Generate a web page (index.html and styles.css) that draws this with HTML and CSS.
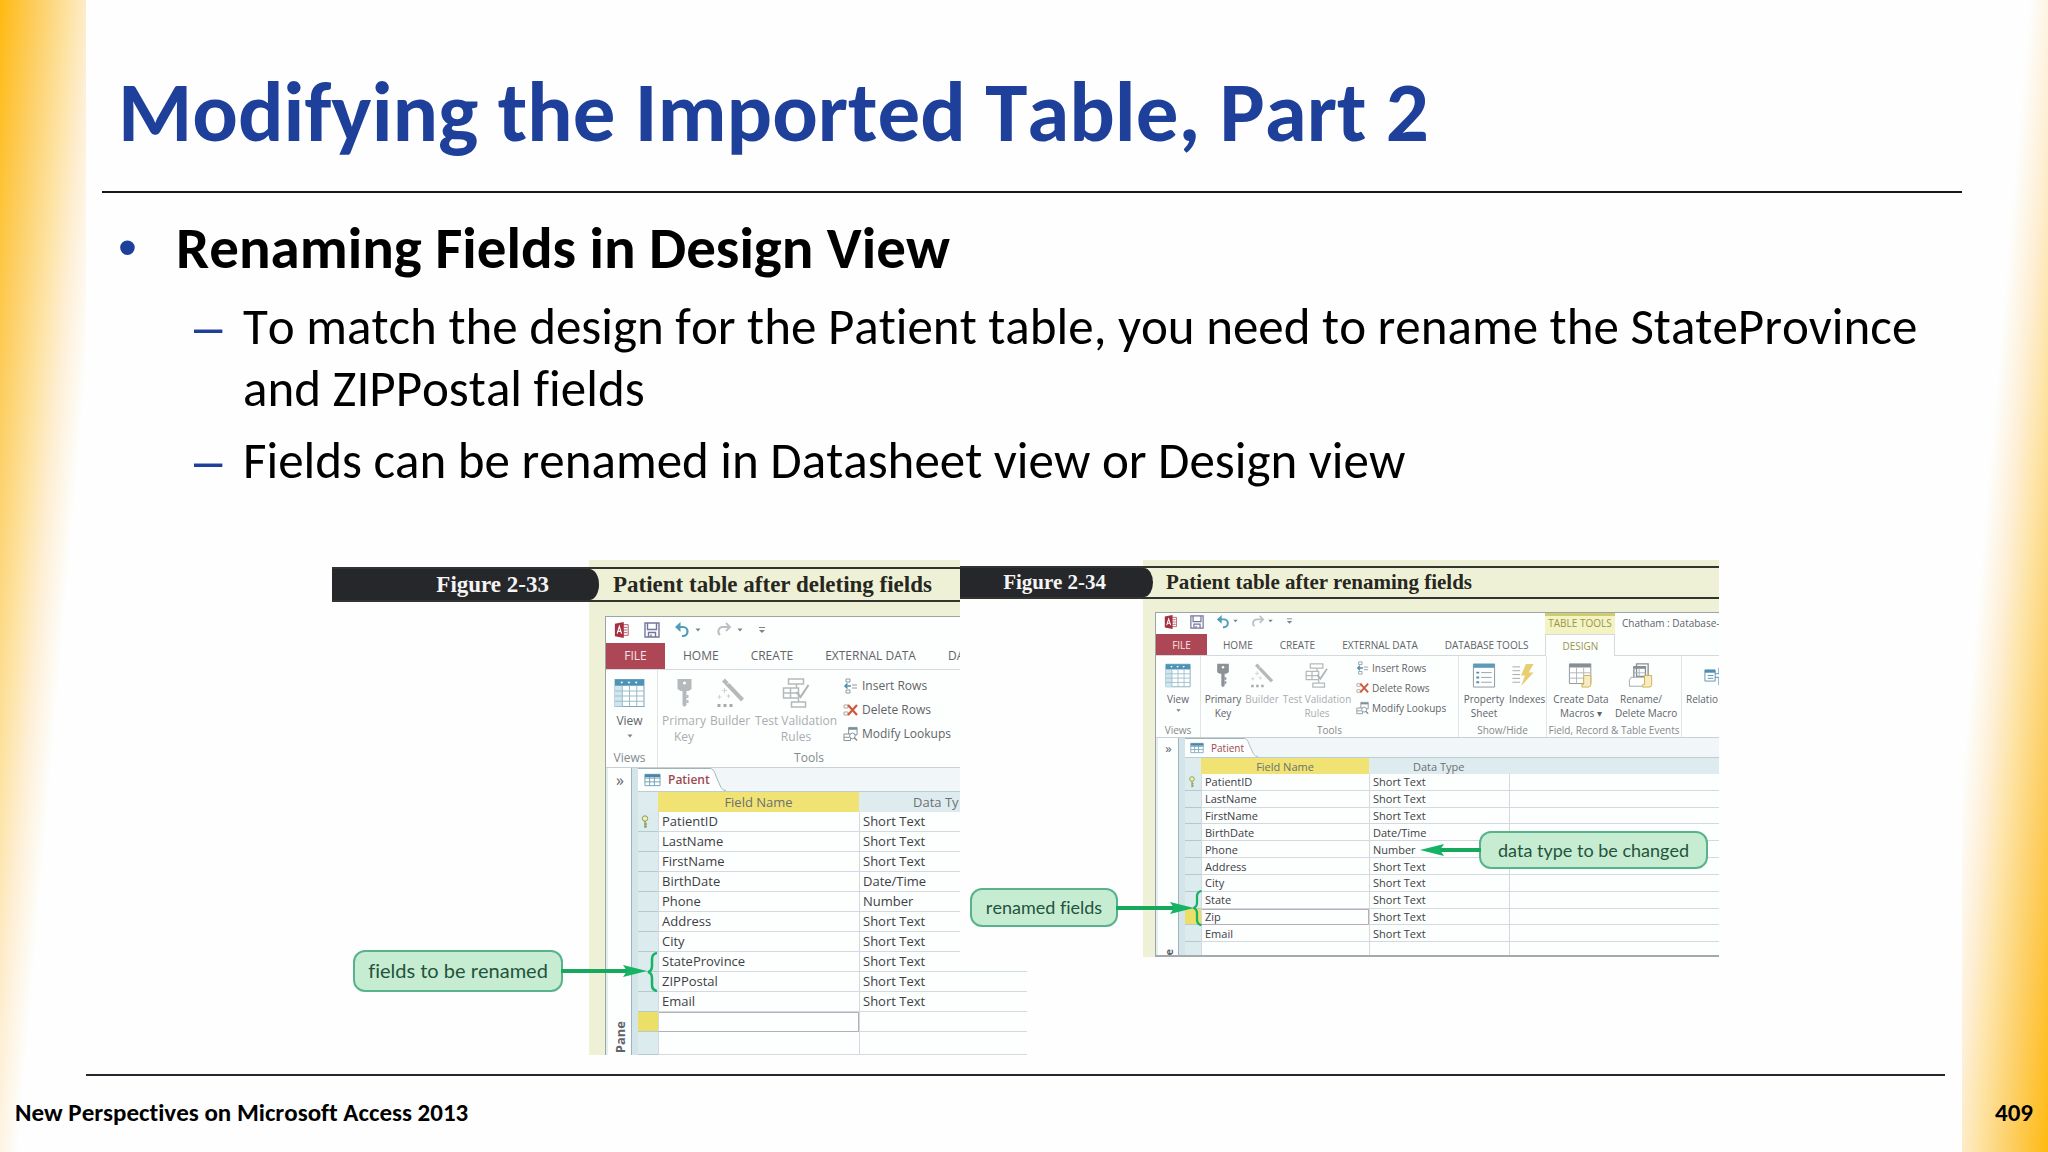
FILE: index.html
```html
<!DOCTYPE html>
<html lang="en">
<head>
<meta charset="utf-8">
<title>Modifying the Imported Table, Part 2</title>
<link rel="stylesheet" href="styles.css">
</head>
<body>
<svg class="sprite" aria-hidden="true">
  <symbol id="i-access" viewBox="0 0 16 18"><path d="M9 3h6v12H9z" fill="#fff" stroke="#b0485a"/><path d="M10 6h4M10 9h4M10 12h4" stroke="#b0485a"/><path d="M0 2l10-2v18L0 16z" fill="#a5303f"/><path d="M2.500 13L5 5l2.500 8M3.500 10.500h3" fill="none" stroke="#fff" stroke-width="1.300"/></symbol>
  <symbol id="i-save" viewBox="0 0 16 16"><path d="M1 1h14v14H1zM3.500 1v6.500h9V1M4.500 15v-4.500h7V15M7 15v-2.500" fill="none" stroke="#75759c" stroke-width="1.400"/></symbol>
  <symbol id="i-undo" viewBox="0 0 16 16"><path d="M3 5h6a4.500 4.500 0 010 9H8" fill="none" stroke="#4f9eb5" stroke-width="2.200"/><path d="M6.500 0L1 5l5.500 5z" fill="#4f9eb5"/></symbol>
  <symbol id="i-redo" viewBox="0 0 16 16"><path d="M13 5H7a4.500 4.500 0 00-3 8" fill="none" stroke="#bcc0c4" stroke-width="2"/><path d="M10 1l4 4-4 4" fill="none" stroke="#bcc0c4" stroke-width="1.800"/></symbol>
  <symbol id="i-down" viewBox="0 0 8 8"><path d="M1.500 2.500h5L4 5.500z" fill="#7d8286"/></symbol>
  <symbol id="i-more" viewBox="0 0 8 8"><path d="M1 1.500h6" stroke="#7d8286"/><path d="M1 4h6L4 7z" fill="#7d8286"/></symbol>
  <symbol id="i-grid" viewBox="0 0 30 28"><path d="M1 1h28v26H1z" fill="#fff" stroke="#7ba9bd"/><path d="M1 7h7v20H1z" fill="#cfe6ef"/><path d="M1 1h28v6H1z" fill="#4d93b3"/><path d="M8 7v20M15 7v20M22 7v20M1 12h28M1 17h28M1 22h28" stroke="#9dbcc9" fill="none"/><path d="M6 3l3 0-1.500 2zM13 3h3l-1.500 2zM20 3h3l-1.500 2z" fill="#fff"/></symbol>
  <symbol id="i-key" viewBox="0 0 16 30"><path d="M1 1h14v10l-3 2H4l-3-2z" fill="currentColor"/><circle cx="8" cy="5" r="1.500" fill="#fff"/><path d="M6 12v15l2 2 2-2V12z" fill="currentColor"/><path d="M10 17h2v3h-2zM10 22h2v3h-2z" fill="currentColor"/></symbol>
  <symbol id="i-wand" viewBox="0 0 28 30"><path d="M7 2l19 20" stroke="#b5b9bb" stroke-width="4"/><path d="M11 6l3-3" stroke="#fff"/><path d="M8 10v5M5.500 12.500h5M3 17v4M1 19h4M12 16v4M10 18h4" stroke="#cfd2d4"/><path d="M1 26h3v3H1zM7 26h3v3H7zM13 26h3v3h-3z" fill="#a6aaad"/></symbol>
  <symbol id="i-rules" viewBox="0 0 28 30"><path d="M6 1h15v5H6zM9 24h14v5H9zM1 10h15v10H1zM1 15h15M8 10v10M14 6v4M16 20v4" fill="none" stroke="#b5b9bb" stroke-width="1.500"/><path d="M14 14l4 5 8-12" fill="none" stroke="#aeb3b5" stroke-width="2"/></symbol>
  <symbol id="i-insert" viewBox="0 0 15 16"><path d="M3 1h4v3H3zM3 12h4v3H3z" fill="#fff" stroke="#8f9ba3"/><path d="M9 7h5M9 10h5" stroke="#8f9ba3"/><path d="M8 8H2M4.500 5.500L2 8l2.500 2.500" fill="none" stroke="#4c8fae" stroke-width="1.500"/></symbol>
  <symbol id="i-delete" viewBox="0 0 15 14"><path d="M1 2h4v3H1zM1 9h4v3H1z" fill="#fff" stroke="#b6a79c"/><path d="M5 2l9 10M14 2L5 12" stroke="#cd5a3c" stroke-width="2.200"/></symbol>
  <symbol id="i-lookup" viewBox="0 0 16 16"><path d="M6 1h9v8H6z" fill="#fff" stroke="#7f8d94"/><path d="M6 2.500h9" stroke="#7f8d94" stroke-width="2"/><path d="M1 8h7v7H1zM1 11.500h6" fill="#fff" stroke="#7f8d94"/><circle cx="10" cy="10" r="3" fill="#fff" stroke="#7f8d94"/><path d="M12 12l3 3" stroke="#7f8d94" stroke-width="1.600"/></symbol>
  <symbol id="i-sheet" viewBox="0 0 24 26"><path d="M1 1h22v24H1z" fill="#fff" stroke="#8b979e"/><path d="M1 1h22v4H1z" fill="#5b9cba"/><path d="M4 10h3M4 15h3M4 20h3" stroke="#4c8fae" stroke-width="2"/><path d="M9 10h11M9 15h11M9 20h11" stroke="#98a3a8"/></symbol>
  <symbol id="i-index" viewBox="0 0 24 26"><path d="M1 4h8M1 8h8M1 12h8M1 16h8M1 20h8" stroke="#a3abaf"/><path d="M15 1h8l-5 9h5L10 24l4-11h-4z" fill="#e8cd72"/></symbol>
  <symbol id="i-macro" viewBox="0 0 28 28"><path d="M1 1h24v22H1z" fill="#fff" stroke="#858f94"/><path d="M1 1h24v4H1z" fill="#858f94"/><path d="M9 5v18M17 5v18M1 11h24M1 17h24" stroke="#a9b1b5"/><path d="M17 14h8v10q0 3-3 3h-7v-3h2z" fill="#f6ecc4" stroke="#d1ad3f"/></symbol>
  <symbol id="i-rename" viewBox="0 0 28 28"><path d="M9 1h13v14H9zM6 4h13v14H6z" fill="#fff" stroke="#858f94" stroke-width="1.500"/><path d="M6 5h13" stroke="#858f94" stroke-width="3"/><path d="M12 6v11M6 11h13" stroke="#a9b1b5"/><path d="M3 16h15l2 3v7H1v-7z" fill="#fff" stroke="#98a3a8"/><path d="M18 14h8v10q0 3-3 3h-7v-3h2z" fill="#f6ecc4" stroke="#d1ad3f"/></symbol>
  <symbol id="i-relation" viewBox="0 0 28 26"><path d="M1 7h11v12H1z" fill="#fff" stroke="#5b8fae"/><path d="M1 8.500h11" stroke="#4c8fae" stroke-width="3"/><path d="M4 13h6M4 16h6M12 11h4V5h10M12 15h4v8h10" fill="none" stroke="#5b8fae"/></symbol>
  <symbol id="i-tab" viewBox="0 0 18 14"><path d="M1 1h16v12H1z" fill="#fff" stroke="#6f9fb8"/><path d="M1 2h16M1 5h16M1 9h16M6 1v12M11 1v12" stroke="#6f9fb8"/><path d="M1 1h16v3H1z" fill="#4d86a8"/></symbol>
  <symbol id="i-rowkey" viewBox="0 0 8 14"><circle cx="4" cy="3.500" r="2.700" fill="#eef0b8" stroke="#8a9a4e"/><path d="M4 6v7M4 9h2M4 11.500h2" stroke="#8a9a4e" stroke-width="1.300"/></symbol>
  <symbol id="i-arrow" viewBox="0 0 24 12"><path d="M0 0l24 6-24 6 4-6z" fill="#16b364"/></symbol>
  <symbol id="i-brace" viewBox="0 0 10 40"><path d="M10 1q-5 1-5 6v7q0 5-4 6 4 1 4 6v7q0 5 5 6" fill="none" stroke="#16b364" stroke-width="2.500"/></symbol>
</svg>

<main class="slide">
  <h1 class="title">Modifying the Imported Table, Part 2</h1>

  <ul class="points">
    <li class="point">
      <div class="point-body">
        <h2 class="point-head">Renaming Fields in Design View</h2>
        <ul class="subpoints">
          <li>To match the design for the Patient table, you need to rename the StateProvince and ZIPPostal fields</li>
          <li>Fields can be renamed in Datasheet view or Design view</li>
        </ul>
      </div>
    </li>
  </ul>

  <div class="figures">
    <figure class="figure figure-before">
      <figcaption class="caption"><span class="caption-no">Figure 2-33</span><span class="caption-text">Patient table after deleting fields</span></figcaption>
      <div class="window">
        <div class="quick">
          <svg class="q-icon"><use href="#i-access"/></svg><svg class="q-icon"><use href="#i-save"/></svg><svg class="q-icon"><use href="#i-undo"/></svg><svg class="q-drop"><use href="#i-down"/></svg><svg class="q-icon"><use href="#i-redo"/></svg><svg class="q-drop"><use href="#i-down"/></svg><svg class="q-drop q-more"><use href="#i-more"/></svg>
        </div>
        <nav class="tabs">
          <button class="tab tab-file">FILE</button><button class="tab">HOME</button><button class="tab">CREATE</button><button class="tab">EXTERNAL DATA</button><button class="tab">DA</button>
        </nav>
        <div class="ribbon">
          <section class="group g-views">
            <div class="tools"><button class="tool"><svg><use href="#i-grid"/></svg>View<svg class="drop"><use href="#i-down"/></svg></button></div>
            <div class="group-name">Views</div>
          </section>
          <section class="group g-tools">
            <div class="tools">
              <button class="tool t-key faint"><svg><use href="#i-key"/></svg>Primary<br>Key</button>
              <button class="tool t-build faint"><svg><use href="#i-wand"/></svg>Builder</button>
              <button class="tool t-test faint"><svg><use href="#i-rules"/></svg>Test Validation<br>Rules</button>
              <div class="stack">
                <button class="row-tool"><svg><use href="#i-insert"/></svg>Insert Rows</button>
                <button class="row-tool"><svg><use href="#i-delete"/></svg>Delete Rows</button>
                <button class="row-tool"><svg><use href="#i-lookup"/></svg>Modify Lookups</button>
              </div>
            </div>
            <div class="group-name">Tools</div>
          </section>
        </div>
        <div class="work">
          <div class="pane"><span class="pane-open">»</span><span class="pane-name">Pane</span></div>
          <div class="doc">
            <div class="doc-tabs"><div class="doc-tab"><svg><use href="#i-tab"/></svg>Patient</div><svg class="slant" viewBox="0 0 16 24" preserveAspectRatio="none"><path d="M0 0q4 0 6 8l5 12q2 4 5 4H0z" fill="#fff"/><path d="M0 .5q4 0 6 8l5 12q2 3 5 3" fill="none" stroke="#9fb4ba"/></svg></div>
            <table class="fields">
              <colgroup><col class="c-sel"><col class="c-name"><col class="c-type"></colgroup>
              <thead><tr><th></th><th class="on">Field Name</th><th class="type-head">Data Ty</th></tr></thead>
              <tbody>
                <tr><td><svg class="rowkey"><use href="#i-rowkey"/></svg></td><td>PatientID</td><td>Short Text</td></tr>
                <tr><td></td><td>LastName</td><td>Short Text</td></tr>
                <tr><td></td><td>FirstName</td><td>Short Text</td></tr>
                <tr><td></td><td>BirthDate</td><td>Date/Time</td></tr>
                <tr><td></td><td>Phone</td><td>Number</td></tr>
                <tr><td></td><td>Address</td><td>Short Text</td></tr>
                <tr><td></td><td>City</td><td>Short Text</td></tr>
                <tr><td></td><td>StateProvince</td><td>Short Text</td></tr>
                <tr><td></td><td>ZIPPostal</td><td>Short Text</td></tr>
                <tr><td></td><td>Email</td><td>Short Text</td></tr>
                <tr class="current"><td></td><td></td><td></td></tr>
                <tr class="last"><td></td><td></td><td></td></tr>
              </tbody>
            </table>
          </div>
        </div>
      </div>
      <div class="callout callout-rename">fields to be renamed<span class="lead"></span><svg class="tip"><use href="#i-arrow"/></svg><svg class="brace"><use href="#i-brace"/></svg></div>
    </figure>

    <figure class="figure figure-after">
      <figcaption class="caption"><span class="caption-no">Figure 2-34</span><span class="caption-text">Patient table after renaming fields</span></figcaption>
      <div class="window">
        <div class="quick">
          <svg class="q-icon"><use href="#i-access"/></svg><svg class="q-icon"><use href="#i-save"/></svg><svg class="q-icon"><use href="#i-undo"/></svg><svg class="q-drop"><use href="#i-down"/></svg><svg class="q-icon"><use href="#i-redo"/></svg><svg class="q-drop"><use href="#i-down"/></svg><svg class="q-drop q-more"><use href="#i-more"/></svg>
          <span class="context">TABLE TOOLS</span><span class="db-name">Chatham : Database-</span>
        </div>
        <nav class="tabs">
          <button class="tab tab-file">FILE</button><button class="tab">HOME</button><button class="tab">CREATE</button><button class="tab">EXTERNAL DATA</button><button class="tab">DATABASE TOOLS</button><button class="tab tab-design">DESIGN</button>
        </nav>
        <div class="ribbon">
          <section class="group g-views">
            <div class="tools"><button class="tool"><svg><use href="#i-grid"/></svg>View<svg class="drop"><use href="#i-down"/></svg></button></div>
            <div class="group-name">Views</div>
          </section>
          <section class="group g-tools">
            <div class="tools">
              <button class="tool t-key"><svg><use href="#i-key"/></svg>Primary<br>Key</button>
              <button class="tool t-build faint"><svg><use href="#i-wand"/></svg>Builder</button>
              <button class="tool t-test faint"><svg><use href="#i-rules"/></svg>Test Validation<br>Rules</button>
              <div class="stack">
                <button class="row-tool"><svg><use href="#i-insert"/></svg>Insert Rows</button>
                <button class="row-tool"><svg><use href="#i-delete"/></svg>Delete Rows</button>
                <button class="row-tool"><svg><use href="#i-lookup"/></svg>Modify Lookups</button>
              </div>
            </div>
            <div class="group-name">Tools</div>
          </section>
          <section class="group g-show">
            <div class="tools">
              <button class="tool t-prop"><svg><use href="#i-sheet"/></svg>Property<br>Sheet</button>
              <button class="tool t-index"><svg><use href="#i-index"/></svg>Indexes</button>
            </div>
            <div class="group-name">Show/Hide</div>
          </section>
          <section class="group g-events">
            <div class="tools">
              <button class="tool t-macro"><svg><use href="#i-macro"/></svg>Create Data<br>Macros ▾</button>
              <button class="tool t-rename"><svg><use href="#i-rename"/></svg>Rename/<br>Delete Macro</button>
            </div>
            <div class="group-name">Field, Record &amp; Table Events</div>
          </section>
          <section class="group g-rel">
            <div class="tools"><button class="tool t-rel"><svg><use href="#i-relation"/></svg>Relatio</button></div>
          </section>
        </div>
        <div class="work">
          <div class="pane"><span class="pane-open">»</span><span class="pane-name">e</span></div>
          <div class="doc">
            <div class="doc-tabs"><div class="doc-tab"><svg><use href="#i-tab"/></svg>Patient</div><svg class="slant" viewBox="0 0 16 24" preserveAspectRatio="none"><path d="M0 0q4 0 6 8l5 12q2 4 5 4H0z" fill="#fff"/><path d="M0 .5q4 0 6 8l5 12q2 3 5 3" fill="none" stroke="#9fb4ba"/></svg></div>
            <table class="fields">
              <colgroup><col class="c-sel"><col class="c-name"><col class="c-type"><col></colgroup>
              <thead><tr><th></th><th class="on">Field Name</th><th class="type-head">Data Type</th><th></th></tr></thead>
              <tbody>
                <tr><td><svg class="rowkey"><use href="#i-rowkey"/></svg></td><td>PatientID</td><td>Short Text</td><td></td></tr>
                <tr><td></td><td>LastName</td><td>Short Text</td><td></td></tr>
                <tr><td></td><td>FirstName</td><td>Short Text</td><td></td></tr>
                <tr><td></td><td>BirthDate</td><td>Date/Time</td><td></td></tr>
                <tr><td></td><td>Phone</td><td>Number</td><td></td></tr>
                <tr><td></td><td>Address</td><td>Short Text</td><td></td></tr>
                <tr><td></td><td>City</td><td>Short Text</td><td></td></tr>
                <tr><td></td><td>State</td><td>Short Text</td><td></td></tr>
                <tr class="current"><td></td><td>Zip</td><td>Short Text</td><td></td></tr>
                <tr><td></td><td>Email</td><td>Short Text</td><td></td></tr>
                <tr class="last"><td></td><td></td><td></td><td></td></tr>
              </tbody>
            </table>
          </div>
        </div>
      </div>
      <div class="callout callout-renamed">renamed fields<span class="lead"></span><svg class="tip"><use href="#i-arrow"/></svg><svg class="brace"><use href="#i-brace"/></svg></div>
      <div class="callout callout-type">data type to be changed<span class="lead"></span><svg class="tip"><use href="#i-arrow"/></svg></div>
    </figure>
  </div>

  <footer class="footer"><span>New Perspectives on Microsoft Access 2013</span><span>409</span></footer>
</main>
</body>
</html>
```

FILE: styles.css
```css
* { box-sizing: border-box; }

body {
  margin: 0;
  background: #fdfefd;
  color: #000;
  font-family: "Carlito", "Calibri", "Lato", sans-serif;
  font-kerning: none;
  font-variant-ligatures: none;
}

.sprite { display: none; }

ul { list-style: none; margin: 0; padding: 0; }

/* Slide */
.slide {
  position: relative;
  display: flex;
  flex-direction: column;
  min-height: 100vh;
  overflow: hidden;
}

.slide::before,
.slide::after {
  content: "";
  position: absolute;
  top: 0;
  bottom: 0;
  width: 86px;
}

.slide::before {
  left: 0;
  background: linear-gradient(95deg, #ffb911 0, #fdd067 40px, #fde3a4 70px, #feefd5 92px, #fdfefd 118px);
}

.slide::after {
  right: 0;
  background: linear-gradient(275deg, #ffb911 0, #fdd067 40px, #fde3a4 70px, #feefd5 92px, #fdfefd 118px);
}

.title {
  margin: 0 86px 0 102px;
  padding: 68px 16px 35px;
  border-bottom: 2px solid #16161c;
  color: #1e409a;
  font-size: 85px;
  line-height: 88px;
  font-weight: 700;
}

.points { margin: 24px 104px 0 118px; }

.point { display: flex; }

.point::before {
  content: "•";
  flex: 0 0 58px;
  color: #1e409a;
  font-family: "Liberation Sans", sans-serif;
  font-size: 54px;
  line-height: 60px;
}

.point-head {
  margin: 0;
  font-size: 59px;
  line-height: 62px;
}

.subpoints {
  display: grid;
  gap: 10px;
  margin-top: 17px;
  padding-left: 18px;
  font-size: 51px;
  line-height: 62px;
}

.subpoints li { display: flex; }

.subpoints li::before {
  content: "–";
  flex: 0 0 49px;
  color: #1e409a;
  font-family: "Liberation Sans", sans-serif;
}

/* Figures */
.figures {
  display: flex;
  justify-content: center;
  align-items: flex-start;
  margin: 68px 0 16px;
  padding-left: 3px;
}

.figure {
  position: relative;
  flex: none;
  margin: 0;
}

.figure-before {
  width: 695px;
  padding-top: 7px;
  background: linear-gradient(90deg, transparent 257px, #eff1d6 257px);
}

.figure-after {
  width: 759px;
  margin-left: -67px;
  padding-top: 6px;
  background: linear-gradient(90deg, #fdfefd 183px, #eff1d6 183px);
  border-bottom: 8px solid #fdfefd;
}

.caption {
  display: flex;
  height: 35px;
  border-top: 2px solid #33342f;
  border-bottom: 2px solid #33342f;
  font: 700 23px/31px "Liberation Serif", serif;
  color: #26271f;
}

.caption-no {
  width: 267px;
  margin-right: 14px;
  padding-right: 50px;
  border-radius: 0 10px 10px 0 / 0 16px 16px 0;
  background: #26272a;
  color: #f4f4f4;
  text-align: right;
}

.figure-after .caption { height: 33px; font-size: 21px; line-height: 29px; }
.figure-after .caption-no { width: 193px; padding-right: 47px; margin-right: 13px; }

.window {
  margin: 14px 0 0 273px;
  border: 1px solid #9ea4a5;
  border-right: 0;
  border-bottom: 0;
  background: #fdfefe;
  overflow: hidden;
  color: #5f6468;
  font: 12px/16px "Open Sans", sans-serif;
}

.figure-after .window {
  margin: 13px 0 0 195px;
  border-bottom: 2px solid #a4a9aa;
  font-size: 10px;
  line-height: 14px;
}

.quick {
  display: flex;
  align-items: center;
  height: 26px;
  padding-left: 8px;
}

.q-icon { width: 16px; height: 16px; margin-right: 14px; }
.q-drop { width: 8px; height: 8px; margin: 0 14px 0 -10px; }
.q-more { margin-left: 0; }

.figure-after .quick { height: 21px; align-items: stretch; }
.figure-after .q-icon { width: 14px; height: 14px; margin: 2px 12px 0 0; }
.figure-after .q-drop { margin: 4px 12px 0 -10px; width: 7px; }
.figure-after .q-more { margin-left: 0; }

.context {
  margin-left: auto;
  width: 70px;
  border-top: 3px solid #cccd6e;
  background: #f4f3c4;
  color: #98954d;
  text-align: center;
  white-space: nowrap;
}

.db-name {
  width: 104px;
  padding: 3px 0 0 7px;
  white-space: nowrap;
}

button {
  margin: 0;
  padding: 0;
  border: 0;
  background: none;
  color: inherit;
  font: inherit;
}

.tabs {
  display: flex;
  gap: 32px;
  height: 27px;
  border-bottom: 1px solid #d3d9dc;
}

.tab { flex: none; }

.tab-file {
  width: 59px;
  margin-right: -14px;
  background: #ae4755;
  color: #f6e3e5;
}

.figure-after .tabs { height: 22px; gap: 27px; }
.figure-after .tab-file { width: 51px; margin-right: -11px; }

.tab-design {
  width: 70px;
  margin: 0 0 -1px -10px;
  border: 1px solid #d3d9dc;
  border-bottom: 0;
  background: #fdfefe;
  color: #98954d;
}

.ribbon {
  display: flex;
  height: 98px;
  border-bottom: 1px solid #c9d0d3;
}

.figure-after .ribbon { height: 82px; }

.group {
  flex: none;
  display: flex;
  flex-direction: column;
  justify-content: space-between;
  padding: 8px 0 1px;
  text-align: center;
}

.group + .group { border-left: 1px solid #e0e4e6; }

.figure-after .group { padding: 7px 0 0; }

.group-name { color: #84898c; white-space: nowrap; }

.tools { display: flex; align-items: flex-start; }

/* The labels of a tool keep to two lines of text */
.tool {
  width: 47px;
  text-align: center;
  white-space: nowrap;
}

.tool svg {
  display: block;
  width: 31px;
  height: 30px;
  margin: 0 auto 5px;
  color: #8c9195;
}

.tool .drop { width: 8px; height: 8px; margin: 3px auto 0; }
.faint { color: #a9adb0; }
.tool.faint svg { color: #b5b9bb; }

.figure-after .tool { width: 44px; }
.figure-after .tool svg { width: 26px; height: 25px; margin-bottom: 4px; }
.figure-after .tool .drop { width: 7px; height: 7px; margin: 1px auto 0; }

.g-views { width: 51px; }
.g-views .group-name { padding-right: 4px; }
.g-tools { width: 303px; }
.tool.t-key { width: 52px; }
.tool.t-build { width: 40px; }
.tool.t-test { width: 92px; }

.figure-after .g-views { width: 44px; }
.figure-after .g-views .group-name { padding-right: 0; }
.figure-after .g-tools { width: 258px; }
.figure-after .t-key { width: 44px; }
.figure-after .t-build { width: 34px; }
.figure-after .t-test { width: 76px; }
.figure-after .g-show { width: 88px; }
.figure-after .t-prop { width: 50px; }
.figure-after .t-index { width: 28px; }
.figure-after .g-events { width: 135px; }
.figure-after .t-macro { width: 68px; }
.figure-after .t-rename { width: 52px; }
.figure-after .g-rel { flex: 1; }
.figure-after .t-rel {
  width: auto;
  padding-left: 4px;
  text-align: left;
}
.figure-after .t-rel svg { margin-left: 18px; }

.stack { display: grid; gap: 8px; margin-left: 1px; }

.row-tool {
  display: flex;
  align-items: center;
  gap: 4px;
  white-space: nowrap;
}

.row-tool svg { width: 15px; height: 16px; }

.figure-after .stack { gap: 6px; margin-top: -2px; }
.figure-after .row-tool { gap: 3px; }
.figure-after .row-tool svg { width: 13px; height: 14px; }

.work { display: flex; }

.pane {
  display: flex;
  flex-direction: column;
  justify-content: space-between;
  align-items: center;
  width: 32px;
  border-left: 2px solid #e3eeee;
  border-right: 6px solid #d4e5e9;
  box-shadow: inset -1px 0 #9fb4ba;
  font-size: 16px;
}

.pane-open { line-height: 24px; }

.pane-name {
  writing-mode: vertical-rl;
  rotate: 180deg;
  padding-top: 2px;
  font-size: 13px;
  font-weight: 700;
}

.figure-after .pane { width: 29px; font-size: 13px; }
.figure-after .pane-open { line-height: 20px; }
.figure-after .pane-name { font-size: 11px; padding: 0; }

.doc { flex: 1; min-width: 0; }

.doc-tabs {
  display: flex;
  height: 23px;
  background: #f1f7f8;
}

.doc-tab {
  display: flex;
  align-items: center;
  gap: 7px;
  padding: 0 0 0 6px;
  background: #fdfefe;
  border-top: 1px solid #9fb4ba;
  color: #9c4a52;
  font-weight: 600;
}

.doc-tab svg { width: 17px; height: 14px; }
.slant { width: 16px; height: 23px; }

.figure-after .doc-tabs { height: 19px; }
.figure-after .doc-tab { padding: 0 0 0 5px; font-weight: 400; }
.figure-after .doc-tab svg { width: 14px; height: 12px; }
.figure-after .slant { width: 14px; height: 19px; }

.fields {
  width: 100%;
  table-layout: fixed;
  border-collapse: separate;
  border-spacing: 0;
  color: #3c4044;
  font-size: 13px;
  line-height: 19px;
}

.c-sel { width: 20px; }
.c-name { width: 201px; }

.fields th {
  height: 21px;
  padding: 0;
  border-top: 1px solid #b9cdd3;
  background: #dfecef;
  color: #6b7073;
  font-weight: 400;
}

.fields th.on { background: #f0e373; }
.fields .type-head { padding-left: 54px; text-align: left; }

.fields td {
  height: 20px;
  padding: 0 0 0 3px;
  border-bottom: 1px solid #d3d9de;
  border-left: 1px solid #d3d9de;
  white-space: nowrap;
}

.fields td:first-child {
  padding: 0;
  border-left: 0;
  border-color: #b5c9d0;
  background: #dcebee;
}

.fields .current td:first-child { background: #ecdf68; }
.fields .current td:nth-child(2) { box-shadow: inset -1px 1px #b8aeb8; border-bottom-color: #b8aeb8; }
.fields .last td { height: 23px; }

.rowkey { display: block; width: 8px; height: 14px; margin-left: 3px; }

.figure-after .fields { height: 198px; font-size: 11px; line-height: 15px; }
.figure-after .fields th { height: 17px; }
.figure-after .fields td { height: 15px; }
.figure-after .fields .last td { height: 12px; line-height: 12px; border-bottom: 0; }
.figure-after .c-sel { width: 16px; }
.figure-after .c-name { width: 168px; }
.figure-after .c-type { width: 140px; }
.figure-after .fields .type-head { padding-left: 44px; }
.figure-after .rowkey { height: 12px; }

/* Callouts lie over the captured windows */
.callout {
  position: absolute;
  border: 2px solid #58b38c;
  border-radius: 12px;
  background: #c6edd2;
  color: #24533c;
  font-family: "Lato", sans-serif;
  font-size: 18px;
  line-height: 34px;
  text-align: center;
  white-space: nowrap;
}

.callout-rename { left: 21px; top: 390px; width: 210px; height: 42px; font-size: 20px; line-height: 36px; }
.callout-renamed { left: 10px; top: 328px; width: 148px; height: 39px; }
.callout-type { left: 519px; top: 271px; width: 229px; height: 38px; }

.lead {
  position: absolute;
  left: 100%;
  top: 50%;
  width: 66px;
  height: 4px;
  margin-top: -2px;
  background: #16a85d;
}

.tip {
  position: absolute;
  left: calc(100% + 62px);
  top: 50%;
  width: 24px;
  height: 12px;
  margin-top: -6px;
}

.brace {
  position: absolute;
  left: calc(100% + 86px);
  top: 0;
  width: 10px;
  height: 40px;
}

.callout-renamed .lead { width: 58px; }
.callout-renamed .tip { left: calc(100% + 54px); }
.callout-renamed .brace { left: calc(100% + 76px); height: 36px; }
.callout-type .lead { left: auto; right: 100%; width: 46px; }
.callout-type .tip { left: auto; right: calc(100% + 37px); scale: -1 1; }

.footer {
  position: relative;
  z-index: 1;
  display: flex;
  justify-content: space-between;
  margin-top: auto;
  padding: 25px 15px;
  font-size: 25px;
  line-height: 28px;
  font-weight: 700;
}

.footer::before {
  content: "";
  position: absolute;
  left: 86px;
  right: 103px;
  top: 0;
  border-top: 2px solid #26262c;
}
```
